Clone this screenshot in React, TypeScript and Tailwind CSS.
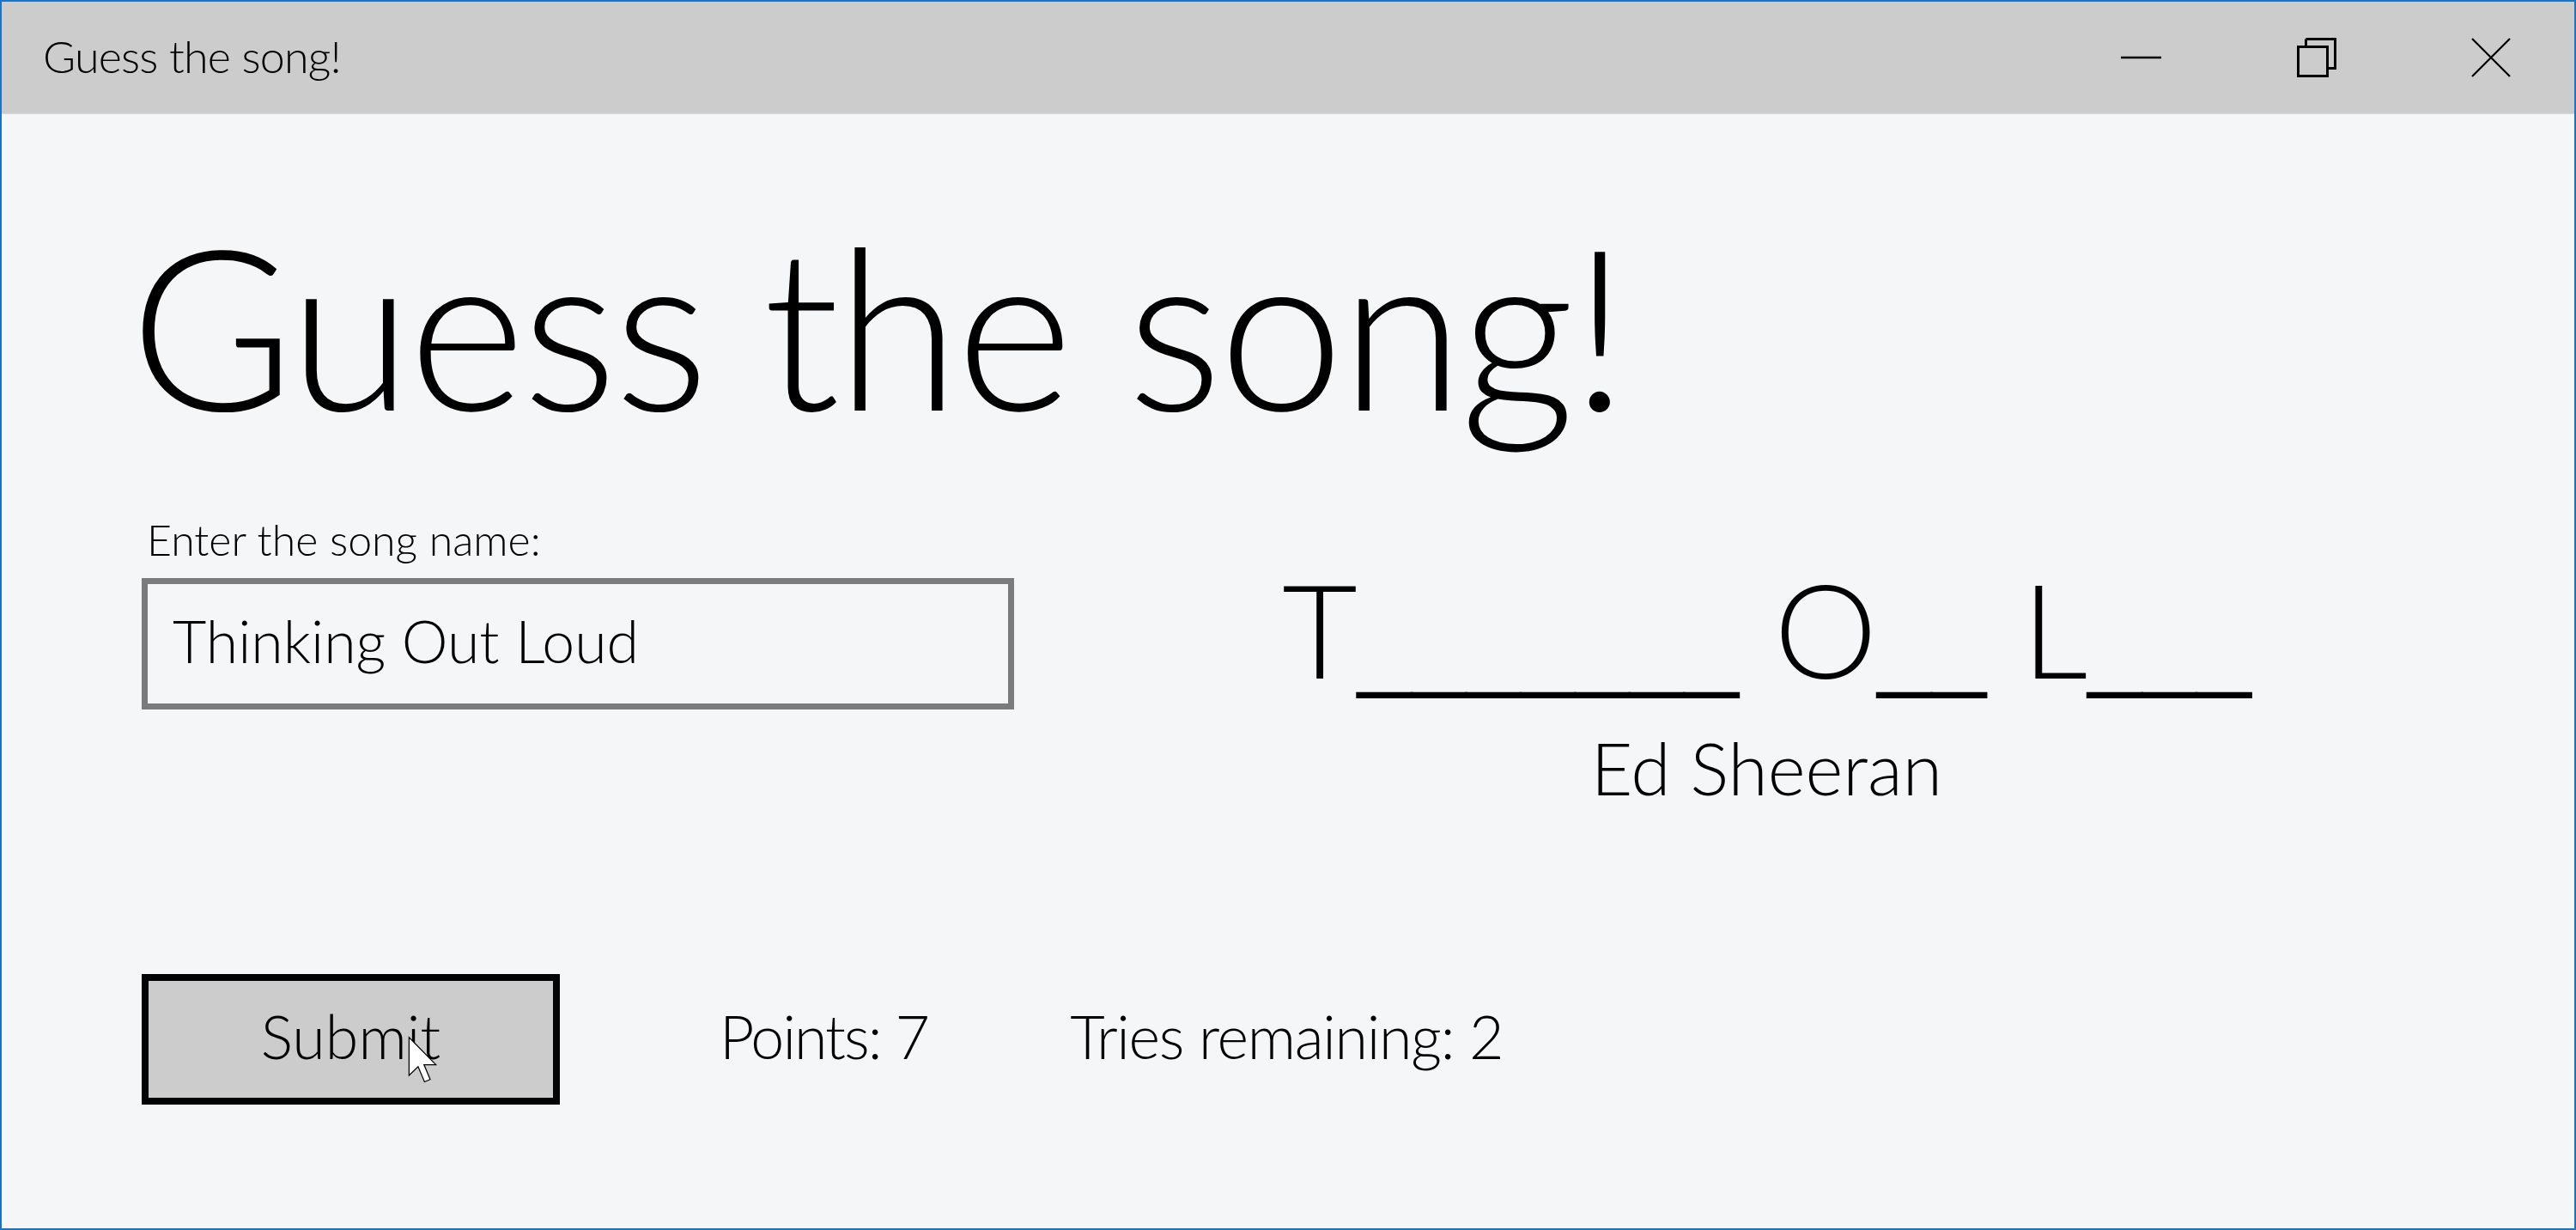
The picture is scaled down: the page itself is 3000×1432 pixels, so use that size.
import React from 'react';

function MinimizeIcon() {
  return (
    <svg width="48" height="8" viewBox="0 0 48 8">
      <line x1="0" y1="4" x2="47" y2="4" stroke="#000" strokeWidth="2.5" />
    </svg>
  );
}

function RestoreIcon() {
  return (
    <svg width="46" height="46" viewBox="0 0 46 46">
      <path d="M10.5 1.5 H44.5 V35.5 H36" fill="none" stroke="#000" strokeWidth="3" />
      <path d="M10.5 1.5 V10.5" fill="none" stroke="#000" strokeWidth="3" />
      <rect x="1.5" y="10.5" width="34" height="34" fill="none" stroke="#000" strokeWidth="3" />
    </svg>
  );
}

function CloseIcon() {
  return (
    <svg width="46" height="46" viewBox="0 0 46 46">
      <path d="M1 1 L45 45 M45 1 L1 45" stroke="#000" strokeWidth="2.2" />
    </svg>
  );
}

function Cursor() {
  return (
    <svg width="36" height="56" viewBox="0 0 13 20" className="absolute left-[302px] top-[64px]">
      <path
        d="M0.5 0.5 L0.5 16.5 L4.3 12.8 L7 19.2 L9.4 18.2 L6.8 12 L11.8 12 Z"
        fill="#fff"
        stroke="#000"
        strokeWidth="0.45"
        strokeLinejoin="miter"
      />
    </svg>
  );
}

// blanks use Liberation Sans so the underscores run together like the original
function Blanks({ n }: { n: number }) {
  return <span className="font-['Liberation_Sans',sans-serif] font-normal text-[114px]">{'_'.repeat(n)}</span>;
}

export default function App() {
  return (
    <div className="w-[3000px] h-[1432px] border-2 border-[#1a74c3] bg-[#f5f6f8] flex flex-col font-['Lato','Open_Sans',sans-serif] font-light text-black overflow-hidden">
      {/* title bar */}
      <div className="h-[131px] shrink-0 bg-[#cccccc] border-b border-[#dadada] flex items-center">
        <div className="pl-[48px] pb-[4px] text-[52px] leading-none tracking-[-0.8px]">Guess the song!</div>
        <div className="ml-auto flex h-full">
          <div className="w-[199px] flex items-center justify-center">
            <MinimizeIcon />
          </div>
          <div className="w-[210px] flex items-center justify-center">
            <RestoreIcon />
          </div>
          <div className="w-[195px] flex items-center justify-center">
            <CloseIcon />
          </div>
        </div>
      </div>

      <main className="flex-1 pl-[163px]">
        <h1 className="mt-[114px] -ml-[14px] text-[261px] leading-none tracking-[-4px]">Guess the song!</h1>

        <div className="mt-[95px] flex items-start">
          <div className="w-[1016px]">
            <label className="block pl-[6px] text-[50px] leading-none">Enter the song name:</label>
            <div className="mt-[20px] h-[153px] border-[7px] border-[#7b7b7b] flex items-center pl-[29px] pb-[8px]">
              <span className="text-[68px] leading-none">Thinking Out Loud</span>
            </div>
          </div>

          <div className="ml-[312px] mt-[52px] flex flex-col items-center">
            <div className="text-[152px] leading-none whitespace-pre">
              T<Blanks n={7} /> O<Blanks n={2} /> L<Blanks n={3} />
            </div>
            <div className="mt-[44px] text-[84px] leading-none">Ed Sheeran</div>
          </div>
        </div>

        <div className="mt-[198px] flex items-center">
          <button className="relative w-[487px] h-[152px] border-[8px] border-[#030405] bg-[#cccccc] flex items-center justify-center pb-[8px] text-[70px] leading-none font-light">
            Submit
            <Cursor />
          </button>
          <span className="ml-[186px] mb-[8px] text-[70px] leading-none tracking-[-2px]">Points: 7</span>
          <span className="ml-[165px] mb-[8px] text-[70px] leading-none tracking-[-1.3px]">Tries remaining: 2</span>
        </div>
      </main>
    </div>
  );
}
